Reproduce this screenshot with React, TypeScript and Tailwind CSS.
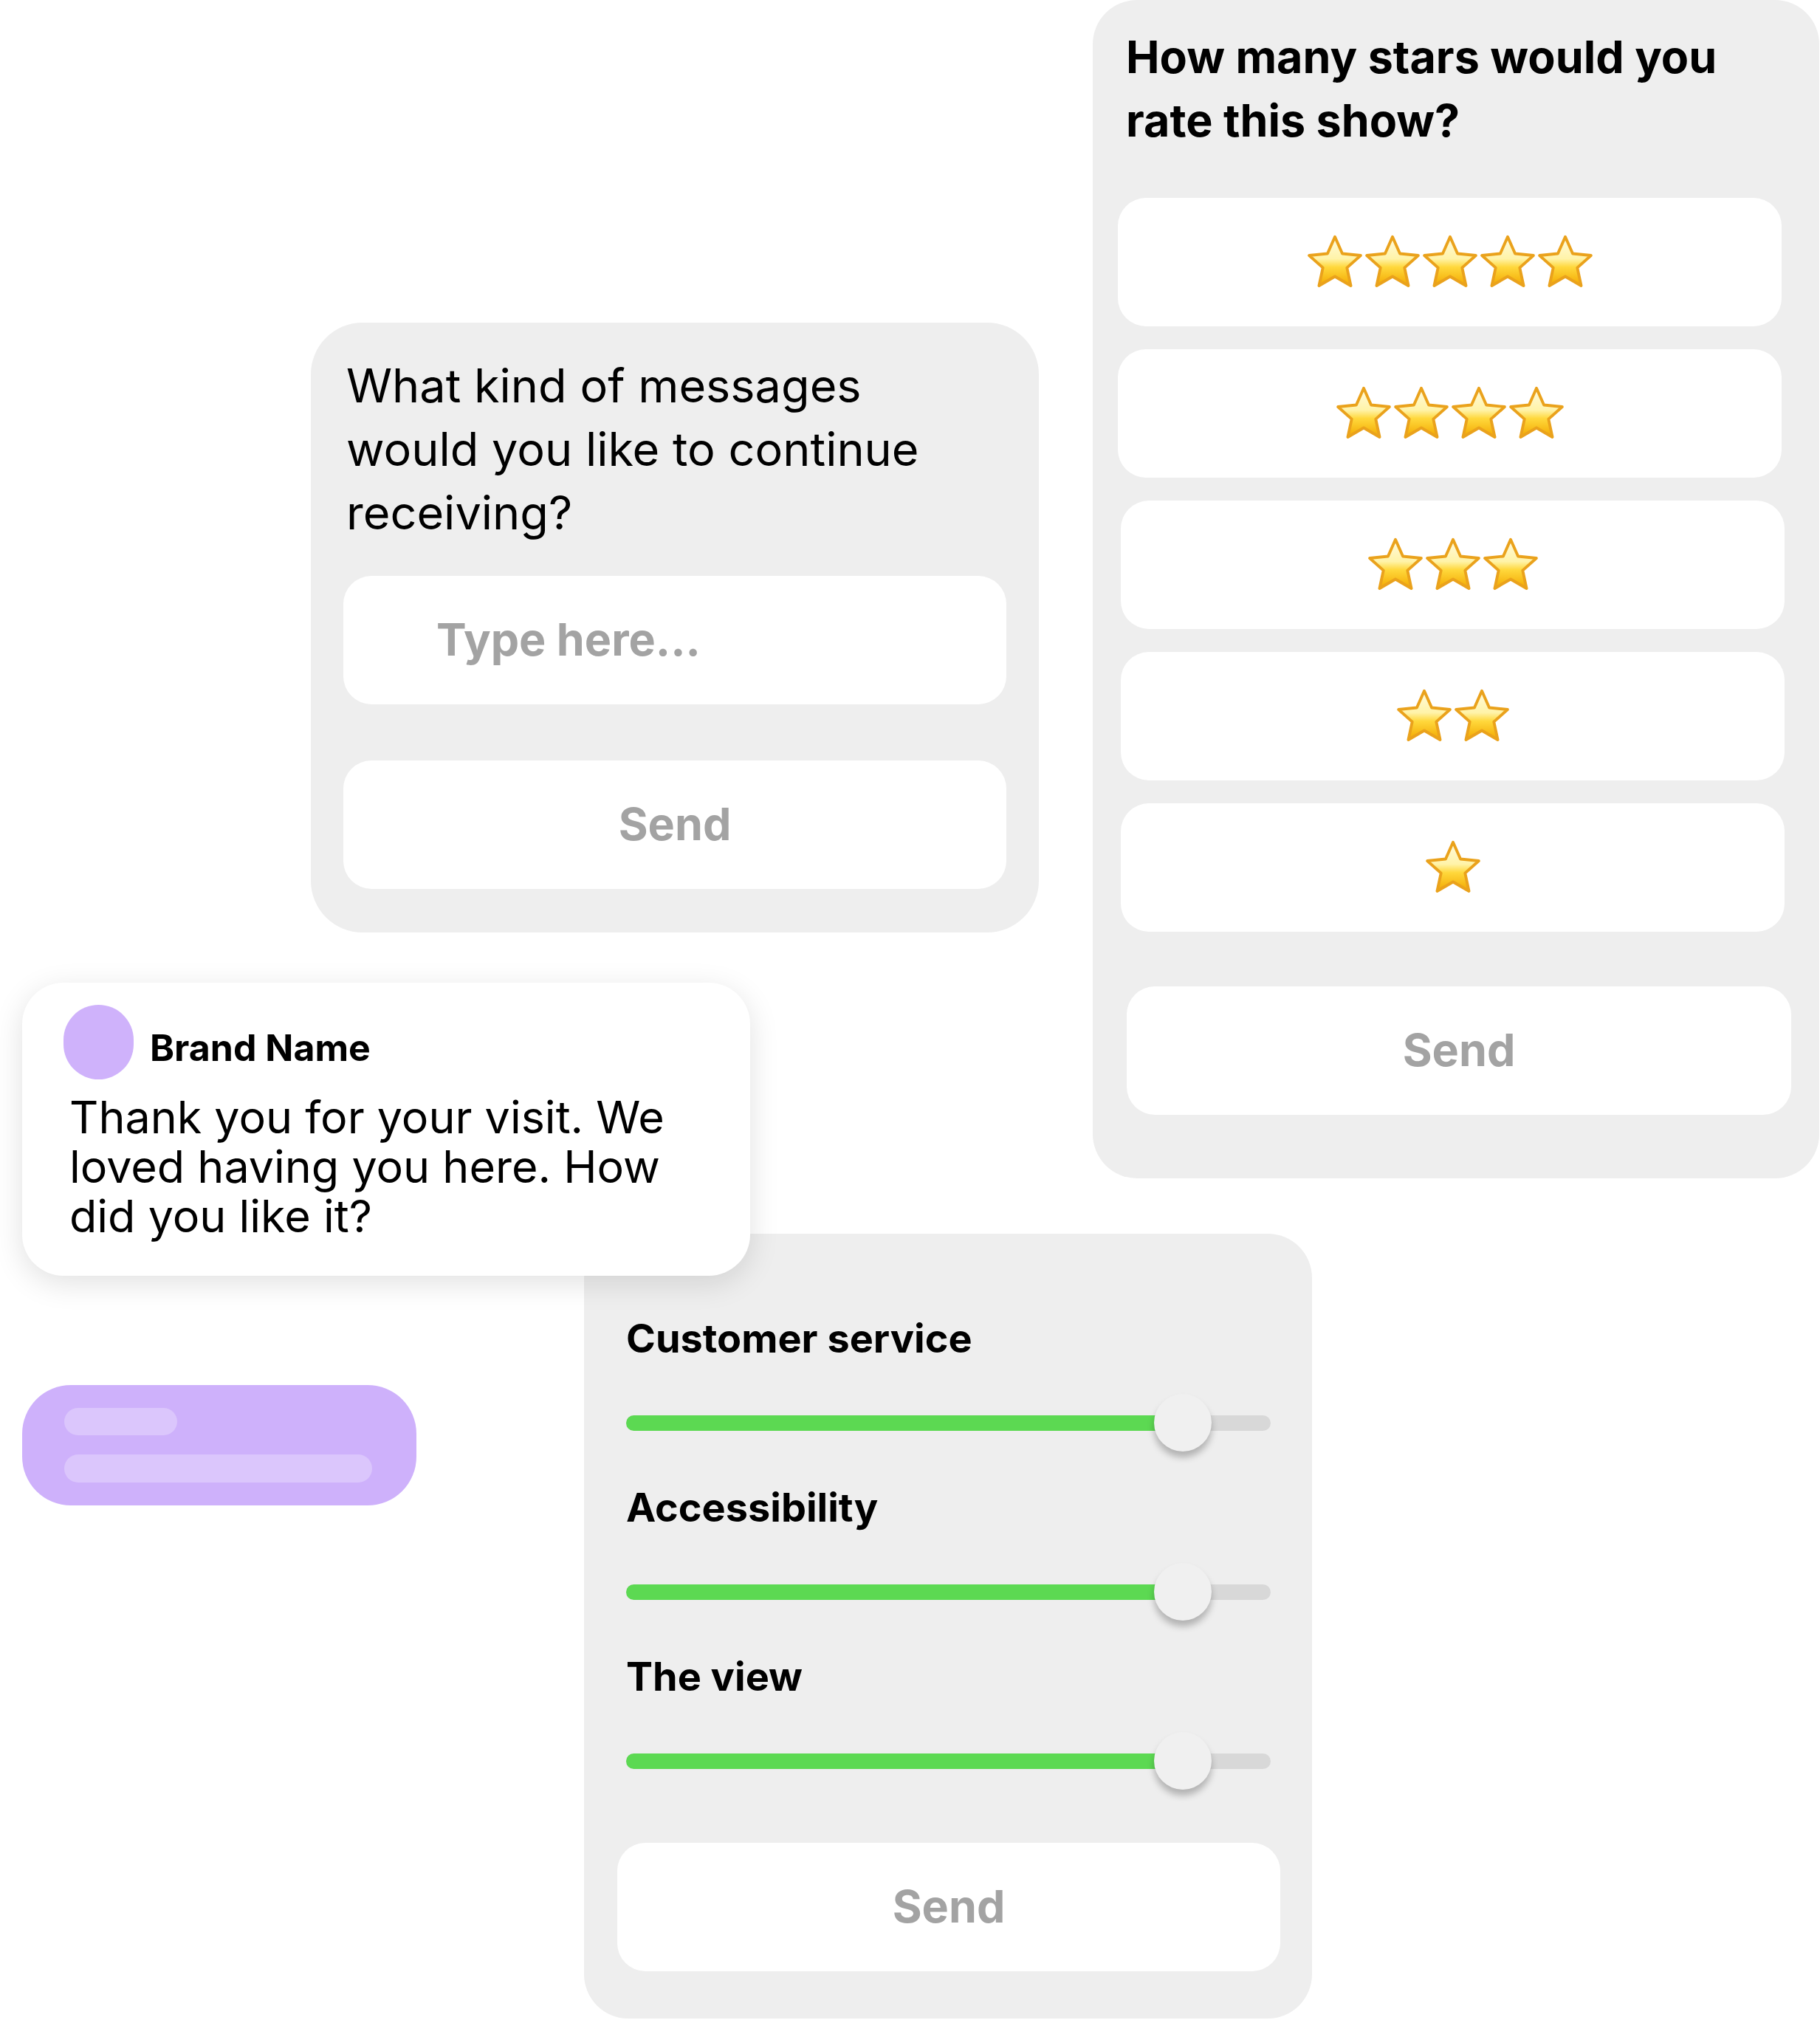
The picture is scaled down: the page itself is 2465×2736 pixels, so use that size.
import { Fragment } from 'react';

const sans = "font-['Inter','Noto_Sans',sans-serif]";

const Star = () => (
  <svg viewBox="0 0 100 100" className="w-[78px] h-[78px]">
    <defs>
      <linearGradient id="starFill" x1="0" y1="0" x2="0" y2="1">
        <stop offset="0" stopColor="#fffbe0" />
        <stop offset="0.45" stopColor="#fff3a8" />
        <stop offset="0.62" stopColor="#ffd83c" />
        <stop offset="1" stopColor="#f2a800" />
      </linearGradient>
    </defs>
    <path
      d="M50 6 L62.9 35.2 L94.7 38.5 L70.9 59.8 L77.6 91 L50 75 L22.4 91 L29.1 59.8 L5.3 38.5 L37.1 35.2 Z"
      fill="url(#starFill)"
      stroke="#eaa21c"
      strokeWidth="5"
      strokeLinejoin="round"
    />
  </svg>
);

const SendButton = ({ className }: { className: string }) => (
  <div
    className={`${className} h-[174px] bg-white rounded-[38px] flex items-center justify-center text-[61px] font-bold text-[#a3a3a3]`}
  >
    Send
  </div>
);

const Slider = ({ label, first }: { label: string; first?: boolean }) => (
  <Fragment>
    <p className={`${first ? '' : 'mt-[48px]'} text-[54px] leading-[56px] font-bold text-black`}>{label}</p>
    <div className="mt-[47px] h-[78px] relative flex items-center">
      <div className="w-full h-[21px] rounded-full bg-[#d8d8d8] overflow-hidden">
        <div className="h-full w-[86%] bg-[#5cd952]" />
      </div>
      <div className="absolute left-[715px] top-0 w-[78px] h-[78px] rounded-full bg-[#f0f0f0] shadow-[0_8px_10px_rgba(0,0,0,0.25)]" />
    </div>
  </Fragment>
);

export default function App() {
  const ratings = [5, 4, 3, 2, 1];

  return (
    <div className={`relative w-[2465px] h-[2736px] bg-white overflow-hidden ${sans}`}>
      {/* star rating card */}
      <div className="absolute left-[1480px] top-0 w-[984px] h-[1596px] bg-[#eeeeee] rounded-[60px] pt-[34px]">
        <h2 className="pl-[45px] text-[61px] leading-[86px] font-bold text-black">
          How many stars would you
          <br />
          rate this show?
        </h2>
        <div className="mt-[62px] flex flex-col gap-[31px]">
          {ratings.map((n, i) => (
            <div
              key={n}
              className={`${i < 2 ? 'ml-[34px]' : 'ml-[38px]'} w-[899px] h-[174px] bg-white rounded-[38px] flex items-center justify-center`}
            >
              {Array.from({ length: n }).map((_, k) => (
                <Star key={k} />
              ))}
            </div>
          ))}
        </div>
        <SendButton className="mt-[74px] ml-[46px] w-[900px]" />
      </div>

      {/* free text card */}
      <div className="absolute left-[421px] top-[437px] w-[986px] h-[826px] bg-[#eeeeee] rounded-[70px] pt-[42px]">
        <p className="pl-[48px] text-[63px] leading-[86px] text-black">
          What kind of messages
          <br />
          would you like to continue
          <br />
          receiving?
        </p>
        <div className="mt-[43px] ml-[44px] w-[898px] h-[174px] bg-white rounded-[38px] flex items-center pl-[126px] text-[61px] font-bold text-[#a3a3a3]">
          Type here...
        </div>
        <SendButton className="mt-[76px] ml-[44px] w-[898px]" />
      </div>

      {/* slider card */}
      <div className="absolute left-[791px] top-[1671px] w-[986px] h-[1063px] bg-[#eeeeee] rounded-[60px] pt-[114px] pl-[57px] pr-[56px]">
        <Slider label="Customer service" first />
        <Slider label="Accessibility" />
        <Slider label="The view" />
        <SendButton className="mt-[72px] -ml-[12px] w-[898px]" />
      </div>

      {/* brand message */}
      <div className="absolute left-[30px] top-[1331px] w-[986px] h-[397px] bg-white rounded-[56px] shadow-[0_10px_40px_rgba(0,0,0,0.12)] pt-[30px] pl-[56px]">
        <div className="flex items-start gap-[22px]">
          <div className="w-[95px] h-[101px] rounded-full bg-[#cfb2fb]" />
          <span className="mt-[33px] text-[50px] leading-[50px] font-bold text-black">Brand Name</span>
        </div>
        <p className="mt-[18px] ml-[8px] text-[61px] leading-[67px] text-black">
          Thank you for your visit. We
          <br />
          loved having you here. How
          <br />
          did you like it?
        </p>
      </div>

      {/* typing bubble */}
      <div className="absolute left-[30px] top-[1876px] w-[534px] h-[163px] bg-[#ceb1fb] rounded-[66px] pt-[31px] pl-[57px] flex flex-col gap-[26px]">
        <div className="w-[153px] h-[37px] rounded-full bg-[#dbc6fc]" />
        <div className="w-[417px] h-[38px] rounded-full bg-[#dbc6fc]" />
      </div>
    </div>
  );
}
